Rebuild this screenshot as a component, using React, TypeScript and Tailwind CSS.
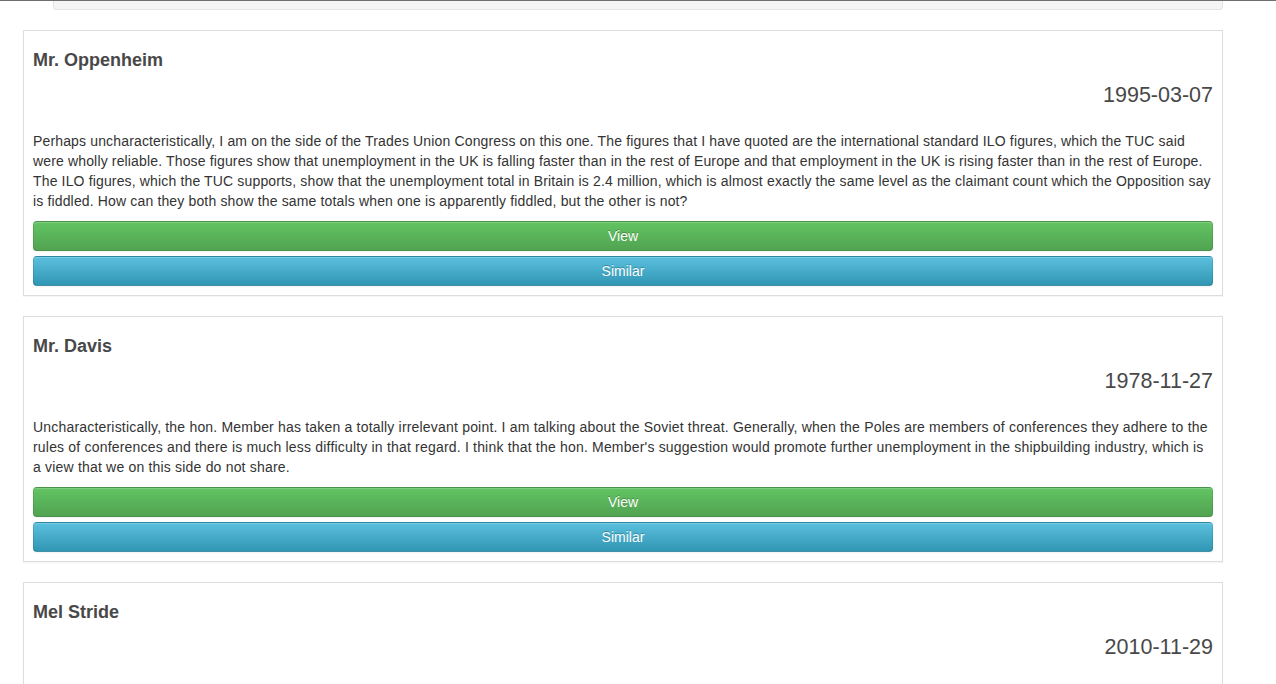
const speeches = [
  {
    id: 1,
    name: "Mr. Oppenheim",
    date: "1995-03-07",
    tracking: "tracking-[0.15px]",
    text: "Perhaps uncharacteristically, I am on the side of the Trades Union Congress on this one. The figures that I have quoted are the international standard ILO figures, which the TUC said were wholly reliable. Those figures show that unemployment in the UK is falling faster than in the rest of Europe and that employment in the UK is rising faster than in the rest of Europe. The ILO figures, which the TUC supports, show that the unemployment total in Britain is 2.4 million, which is almost exactly the same level as the claimant count which the Opposition say is fiddled. How can they both show the same totals when one is apparently fiddled, but the other is not?",
  },
  {
    id: 2,
    name: "Mr. Davis",
    date: "1978-11-27",
    tracking: "tracking-[0.19px]",
    text: "Uncharacteristically, the hon. Member has taken a totally irrelevant point. I am talking about the Soviet threat. Generally, when the Poles are members of conferences they adhere to the rules of conferences and there is much less difficulty in that regard. I think that the hon. Member's suggestion would promote further unemployment in the shipbuilding industry, which is a view that we on this side do not share.",
  },
  {
    id: 3,
    name: "Mel Stride",
    date: "2010-11-29",
    tracking: "tracking-[0.15px]",
    text: "",
  },
];

const btn =
  "block h-[30px] w-full rounded-[4px] border border-black/10 border-b-black/25 text-[14px] leading-[20px] text-white shadow-[inset_0_1px_0_rgba(255,255,255,0.2),0_1px_2px_rgba(0,0,0,0.05)] [text-shadow:0_-1px_0_rgba(0,0,0,0.25)]";

const SpeechCard = ({ speech }: { speech: (typeof speeches)[number] }) => {
  return (
    <div className="mt-[20px] border border-[#dddddd] px-[9px] pt-[19px] pb-[9px] shadow-[0_1px_1px_rgba(0,0,0,0.04)]">
      <h4 className="text-[18px] leading-[20px] font-bold text-[#484848]">
        {speech.name}
      </h4>
      <h3 className="mt-[10px] text-right text-[21.5px] leading-[30px] text-[#484848]">
        {speech.date}
      </h3>

      {speech.text ? (
        <>
          <p
            className={`mt-[21px] text-[14px] leading-[20px] text-[#333333] ${speech.tracking}`}
          >
            {speech.text}
          </p>
          <div className="mt-[10px] flex flex-col gap-[5px]">
            <button
              className={`${btn} bg-linear-to-b from-[#62c462] to-[#51a351]`}
            >
              View
            </button>
            <button
              className={`${btn} bg-linear-to-b from-[#5bc0de] to-[#2f96b4]`}
            >
              Similar
            </button>
          </div>
        </>
      ) : (
        <div className="h-[80px]" />
      )}
    </div>
  );
};

const App = () => {
  return (
    <div className="h-[684px] overflow-hidden bg-white font-['Liberation_Sans',Helvetica,Arial,sans-serif]">
      <div className="h-px bg-[#6e6e6e]" />

      <div className="w-[1223px] pl-[23px]">
        <div className="ml-[30px] h-[9px] rounded-b-[4px] border-x border-b border-[#e3e3e3] bg-[#f5f5f5]" />

        {speeches.map((speech) => (
          <SpeechCard key={speech.id} speech={speech} />
        ))}
      </div>
    </div>
  );
};

export default App;
